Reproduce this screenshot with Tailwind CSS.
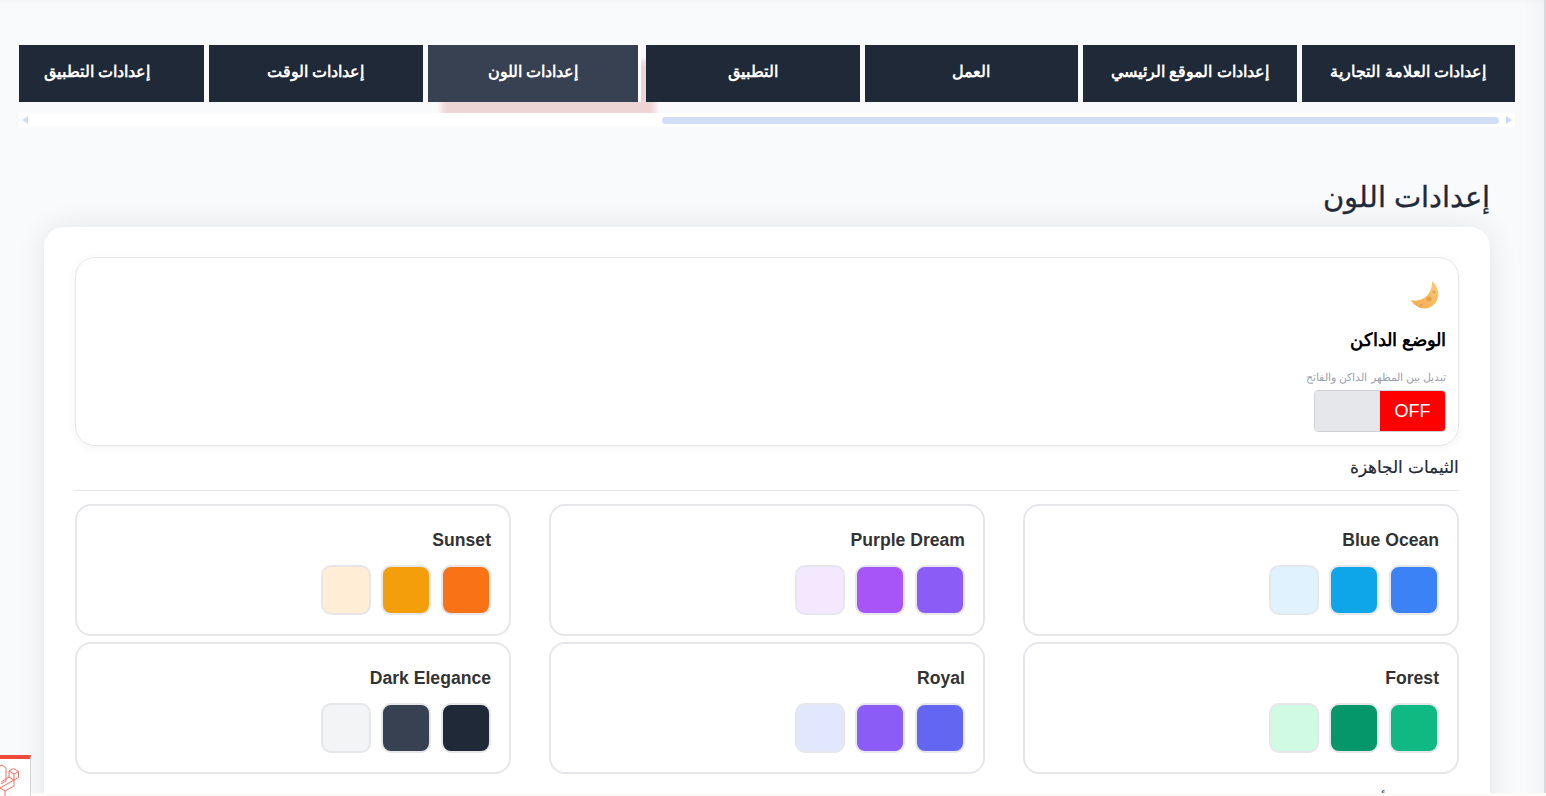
<!DOCTYPE html>
<html lang="ar" dir="rtl">
  <head>
    <meta charset="UTF-8" />
    <meta name="viewport" content="width=device-width, initial-scale=1.0" />
    <title>إعدادات اللون</title>
    <script src="https://cdn.jsdelivr.net/npm/@tailwindcss/browser@4"></script>
  </head>
  <body class="h-[796px] overflow-hidden bg-[#fdfbf8] font-['Liberation_Sans',sans-serif] text-[#1f2937]">
    <div class="h-[793px] overflow-hidden bg-[#f9fafc] border-r-2 border-[#d8d8df] shadow-[inset_0_8px_8px_-8px_rgba(0,0,0,0.05),inset_-25px_0_25px_-25px_rgba(0,0,0,0.06)]">
      <!-- tabs -->
      <div class="pt-[45px] pr-[29px] pl-[19px]">
        <div class="h-[68px] overflow-hidden flex gap-[5px]">
          <button class="w-[213.5px] h-[57px] pb-[3px] shrink-0 bg-[#1f2937] text-white text-[16px] font-bold">إعدادات العلامة التجارية</button>
          <button class="w-[213.5px] h-[57px] pb-[3px] shrink-0 bg-[#1f2937] text-white text-[16px] font-bold">إعدادات الموقع الرئيسي</button>
          <button class="w-[213.5px] h-[57px] pb-[3px] shrink-0 bg-[#1f2937] text-white text-[16px] font-bold">العمل</button>
          <button class="relative z-10 w-[213.5px] h-[57px] pb-[3px] shrink-0 bg-[#1f2937] text-white text-[16px] font-bold">التطبيق</button>
          <button class="w-[213.5px] h-[57px] pb-[3px] shrink-0 bg-[#374151] border-r-[3px] border-white text-white text-[16px] font-bold shadow-[14px_16px_6px_0_rgba(190,60,60,0.2)]">إعدادات اللون</button>
          <button class="relative z-10 w-[213.5px] h-[57px] pb-[3px] shrink-0 bg-[#1f2937] text-white text-[16px] font-bold">إعدادات الوقت</button>
          <button class="w-[213.5px] h-[57px] pb-[3px] shrink-0 bg-[#1f2937] text-white text-[16px] font-bold">إعدادات التطبيق</button>
        </div>
        <!-- scrollbar -->
        <div class="h-[14px] bg-white flex items-center justify-between px-[3px]">
          <span class="w-0 h-0 border-y-[4px] border-y-transparent border-l-[6px] border-l-[#d0dcf7]"></span>
          <div class="flex-1 h-[7px] mr-[7px] ml-[140px]">
            <div class="w-[837px] h-full rounded-full bg-[#d2def6]"></div>
          </div>
          <span class="w-0 h-0 border-y-[4px] border-y-transparent border-r-[6px] border-r-[#d0dcf7]"></span>
        </div>
      </div>

      <div class="pr-[54px] pl-[44px]">
        <h1 class="mt-[50px] h-[50px] text-[28.8px] leading-[40px] font-normal text-[#1f2937] [-webkit-text-stroke:0.3px]">إعدادات اللون</h1>

        <div class="bg-white rounded-[20px] px-[31px] pt-[30px] pb-[30px] shadow-[0_0_30px_rgba(0,0,0,0.09)]">
          <!-- dark mode card -->
          <div class="h-[189px] bg-white border border-[#e5e7eb] rounded-[20px] shadow-[0_2px_10px_rgba(0,0,0,0.05)] pr-[12px] pt-[21px]">
            <svg class="mr-[5px] w-[32px] h-[32px]" viewBox="0 0 32 32">
              <defs>
                <linearGradient id="moon" x1="0" y1="1" x2="1" y2="0">
                  <stop offset="0" stop-color="#f8a94f" />
                  <stop offset="1" stop-color="#f6cc7c" />
                </linearGradient>
              </defs>
              <path d="M23 2C33 11 31 25 19 29C12 31 5 27 2 21C11 24 24 17 23 2Z" fill="url(#moon)" />
              <circle cx="20" cy="20" r="2.6" fill="#eba04a" />
              <circle cx="25" cy="13" r="1.5" fill="#eba04a" />
              <circle cx="12" cy="26" r="1.6" fill="#eba04a" />
            </svg>
            <h3 class="mt-[17px] text-[17.6px] leading-[24px] font-bold text-black">الوضع الداكن</h3>
            <p class="mt-[17px] text-[11.4px] leading-[16px] text-[#9ca3af]">تبديل بين المظهر الداكن والفاتح</p>
            <div class="mt-[5px] w-[132px] h-[42px] flex rounded-[4px] border border-[#cfd1d4] overflow-hidden">
              <span class="w-[65px] flex items-center justify-center bg-[#ff0000] text-white text-[18px]">OFF</span>
              <span class="flex-1 bg-[#e5e7eb]"></span>
            </div>
          </div>

          <h2 class="mt-[10px] text-[16.8px] leading-[24px] font-normal text-[#1f2937] [-webkit-text-stroke:0.2px]">الثيمات الجاهزة</h2>
          <div class="mt-[10px] -ml-[1px] border-t border-[#e5e7eb]"></div>

          <!-- themes -->
          <div class="mt-[13px] grid grid-cols-3 gap-x-[38px] gap-y-[6px]">
            <div class="h-[132px] border-2 border-[#e5e7eb] rounded-[16px] pt-[22px] pr-[18px]">
              <div class="text-[17.6px] leading-[24px] font-bold text-[#333]">Blue Ocean</div>
              <div class="mt-[13px] flex gap-[10px]">
                <span class="w-[50px] h-[50px] rounded-[10px] border-2 border-[#e5e7eb] bg-[#3b82f6]"></span>
                <span class="w-[50px] h-[50px] rounded-[10px] border-2 border-[#e5e7eb] bg-[#0ea5e9]"></span>
                <span class="w-[50px] h-[50px] rounded-[10px] border-2 border-[#e5e7eb] bg-[#e0f2fe]"></span>
              </div>
            </div>
            <div class="h-[132px] border-2 border-[#e5e7eb] rounded-[16px] pt-[22px] pr-[18px]">
              <div class="text-[17.6px] leading-[24px] font-bold text-[#333]">Purple Dream</div>
              <div class="mt-[13px] flex gap-[10px]">
                <span class="w-[50px] h-[50px] rounded-[10px] border-2 border-[#e5e7eb] bg-[#8b5cf6]"></span>
                <span class="w-[50px] h-[50px] rounded-[10px] border-2 border-[#e5e7eb] bg-[#a855f7]"></span>
                <span class="w-[50px] h-[50px] rounded-[10px] border-2 border-[#e5e7eb] bg-[#f3e8ff]"></span>
              </div>
            </div>
            <div class="h-[132px] border-2 border-[#e5e7eb] rounded-[16px] pt-[22px] pr-[18px]">
              <div class="text-[17.6px] leading-[24px] font-bold text-[#333]">Sunset</div>
              <div class="mt-[13px] flex gap-[10px]">
                <span class="w-[50px] h-[50px] rounded-[10px] border-2 border-[#e5e7eb] bg-[#f97316]"></span>
                <span class="w-[50px] h-[50px] rounded-[10px] border-2 border-[#e5e7eb] bg-[#f59e0b]"></span>
                <span class="w-[50px] h-[50px] rounded-[10px] border-2 border-[#e5e7eb] bg-[#ffedd5]"></span>
              </div>
            </div>
            <div class="h-[132px] border-2 border-[#e5e7eb] rounded-[16px] pt-[22px] pr-[18px]">
              <div class="text-[17.6px] leading-[24px] font-bold text-[#333]">Forest</div>
              <div class="mt-[13px] flex gap-[10px]">
                <span class="w-[50px] h-[50px] rounded-[10px] border-2 border-[#e5e7eb] bg-[#10b981]"></span>
                <span class="w-[50px] h-[50px] rounded-[10px] border-2 border-[#e5e7eb] bg-[#059669]"></span>
                <span class="w-[50px] h-[50px] rounded-[10px] border-2 border-[#e5e7eb] bg-[#d1fae5]"></span>
              </div>
            </div>
            <div class="h-[132px] border-2 border-[#e5e7eb] rounded-[16px] pt-[22px] pr-[18px]">
              <div class="text-[17.6px] leading-[24px] font-bold text-[#333]">Royal</div>
              <div class="mt-[13px] flex gap-[10px]">
                <span class="w-[50px] h-[50px] rounded-[10px] border-2 border-[#e5e7eb] bg-[#6366f1]"></span>
                <span class="w-[50px] h-[50px] rounded-[10px] border-2 border-[#e5e7eb] bg-[#8b5cf6]"></span>
                <span class="w-[50px] h-[50px] rounded-[10px] border-2 border-[#e5e7eb] bg-[#e0e7ff]"></span>
              </div>
            </div>
            <div class="h-[132px] border-2 border-[#e5e7eb] rounded-[16px] pt-[22px] pr-[18px]">
              <div class="text-[17.6px] leading-[24px] font-bold text-[#333]">Dark Elegance</div>
              <div class="mt-[13px] flex gap-[10px]">
                <span class="w-[50px] h-[50px] rounded-[10px] border-2 border-[#e5e7eb] bg-[#1f2937]"></span>
                <span class="w-[50px] h-[50px] rounded-[10px] border-2 border-[#e5e7eb] bg-[#374151]"></span>
                <span class="w-[50px] h-[50px] rounded-[10px] border-2 border-[#e5e7eb] bg-[#f3f4f6]"></span>
              </div>
            </div>
          </div>
          <h2 class="mt-[15px] text-[16.8px] leading-[24px] font-normal text-[#1f2937]">تخصيص الألوان</h2>
        </div>
      </div>
    </div>

    <!-- laravel badge -->
    <div class="fixed left-0 bottom-0 w-[31px] h-[41px] bg-white border-t-4 border-t-[#ef4b3a] border-r border-r-[#d4d4d8] overflow-hidden">
      <svg class="w-[30px] h-[37px]" viewBox="0 4 30 37" fill="none" stroke="#f56c62" stroke-width="1" stroke-linejoin="round">
        <path d="M9 16L13.5 13.5L18.5 16.5L14 19Z" />
        <path d="M9 16V22M14 19V25M18.5 16.5V22.5L14 25L0 33M9 22L14 25M9 22L1 27" />
        <path d="M-2 12L2 10L6 13V26L1 29" />
        <path d="M0 33L5 36L14 31M5 36V41M14 25V31" />
      </svg>
    </div>
  </body>
</html>
